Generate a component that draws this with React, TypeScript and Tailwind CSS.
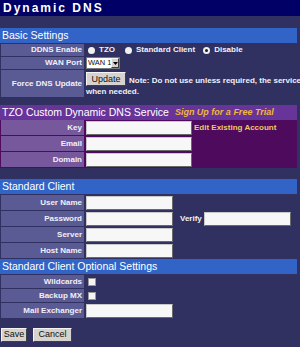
import React from "react";

const F = "font-['Liberation_Sans',Arial,sans-serif]";

function Label({ children, purple = false, h = "h-[15px]" }: { children?: React.ReactNode; purple?: boolean; h?: string }) {
  return (
    <div
      className={`${h} ml-[1px] w-[83px] shrink-0 flex items-center justify-end pr-[2px] text-[8px] font-bold text-[#f0f0f8] whitespace-nowrap ${
        purple ? "bg-[#78589c]" : "bg-[#5a5a94]"
      }`}
    >
      {children}
    </div>
  );
}

function TextInput({ w }: { w: string }) {
  return (
    <div
      className={`${w} h-[14px] bg-[#f7f7f7] border border-t-[#c8c8c8] border-l-[#c8c8c8] border-b-[#6a6a6a] border-r-[#6a6a6a]`}
    />
  );
}

function Radio({ checked }: { checked?: boolean }) {
  return (
    <div className="w-[7px] h-[7px] rounded-full bg-[#f0f0f0] flex items-center justify-center">
      {checked && <div className="w-[3px] h-[3px] rounded-full bg-[#202020]" />}
    </div>
  );
}

function Check() {
  return <div className="w-[8px] h-[8px] bg-[#f4f4f4] border border-[#9a9a9a]" />;
}

function Btn({ children, w }: { children: React.ReactNode; w: string }) {
  return (
    <div
      className={`${w} h-[14px] shrink-0 bg-[#d6d3ce] border border-t-[#f4f4f4] border-l-[#f4f4f4] border-b-[#404040] border-r-[#404040] flex items-center justify-center text-[9px] font-normal text-[#111]`}
    >
      {children}
    </div>
  );
}

function Header({ children, purple = false }: { children: React.ReactNode; purple?: boolean }) {
  return (
    <div
      className={`h-[15px] flex items-center pl-[2px] text-[10.5px] text-white whitespace-nowrap ${
        purple ? "bg-[#673499]" : "bg-[#3264c8]"
      }`}
    >
      {children}
    </div>
  );
}

export default function App() {
  return (
    <div className={`w-[300px] h-[347px] overflow-hidden bg-[#303061] ${F}`}>
      <div className="h-[16px] bg-[#000066] flex items-center pl-[3px] text-[12px] font-bold tracking-[2px] text-white">
        Dynamic DNS
      </div>
      <div className="h-[12px]" />
      <div className="w-[297px]">
        <Header>Basic Settings</Header>
        <div className="flex flex-col gap-[1px] pt-[1px]">
          <div className="flex h-[12px]">
            <Label h="h-[12px]">DDNS Enable</Label>
            <div className="flex items-center pl-[4px] text-[8px] font-bold text-[#f0f0f8] whitespace-nowrap">
              <Radio />
              <span className="ml-[4px]">TZO</span>
              <span className="ml-[10px]"><Radio /></span>
              <span className="ml-[4px]">Standard Client</span>
              <span className="ml-[8px]"><Radio checked /></span>
              <span className="ml-[4px]">Disable</span>
            </div>
          </div>
          <div className="flex h-[12px]">
            <Label h="h-[12px]">WAN Port</Label>
            <div className="pl-[2px] flex items-center">
              <div className="w-[34px] h-[12px] bg-white border border-[#7a7a7a] flex items-center">
                <span className="flex-1 pl-[1px] text-[7.5px] leading-none text-[#111] whitespace-nowrap">WAN 1</span>
                <div className="w-[8px] h-[10px] shrink-0 bg-[#d6d3ce] border border-t-[#f4f4f4] border-l-[#f4f4f4] border-b-[#404040] border-r-[#404040] flex items-center justify-center">
                  <svg width="5" height="3" viewBox="0 0 5 3"><path d="M0 0h5L2.5 3z" fill="#000" /></svg>
                </div>
              </div>
            </div>
          </div>
          <div className="flex h-[27px]">
            <Label h="h-[27px]">Force DNS Update</Label>
            <div className="pl-[2px] pt-[2px] text-[8px] font-bold text-[#f0f0f8] whitespace-nowrap leading-[9px]">
              <div className="flex items-end">
                <Btn w="w-[40px]">Update</Btn>
                <span className="ml-[3px] mb-[1px]">Note: Do not use unless required, the service</span>
              </div>
              <div className="mt-[1px]">when needed.</div>
            </div>
          </div>
        </div>
        <div className="h-[8px]" />
        <div className="bg-[#4e0a5c]">
          <Header purple>
            <span>TZO Custom Dynamic DNS Service</span>
            <span className="ml-[6px] text-[9px] italic font-bold text-[#f0b838]">Sign Up for a Free Trial</span>
          </Header>
          <div className="flex flex-col gap-[1px] pb-[1px]">
            <div className="flex items-center">
              <Label purple>Key</Label>
              <div className="pl-[2px]"><TextInput w="w-[106px]" /></div>
              <span className="ml-[2px] text-[8px] font-bold text-[#eec868]">Edit Existing Account</span>
            </div>
            <div className="flex items-center">
              <Label purple>Email</Label>
              <div className="pl-[2px]"><TextInput w="w-[106px]" /></div>
            </div>
            <div className="flex items-center">
              <Label purple>Domain</Label>
              <div className="pl-[2px]"><TextInput w="w-[106px]" /></div>
            </div>
          </div>
        </div>
        <div className="h-[11px]" />
        <Header>Standard Client</Header>
        <div className="flex flex-col gap-[1px] pt-[1px]">
          <div className="flex items-center">
            <Label>User Name</Label>
            <div className="pl-[2px]"><TextInput w="w-[87px]" /></div>
          </div>
          <div className="flex items-center">
            <Label>Password</Label>
            <div className="pl-[2px]"><TextInput w="w-[87px]" /></div>
            <span className="ml-[7px] text-[8px] font-bold text-[#f0f0f8]">Verify</span>
            <div className="ml-[2px]"><TextInput w="w-[87px]" /></div>
          </div>
          <div className="flex items-center">
            <Label>Server</Label>
            <div className="pl-[2px]"><TextInput w="w-[87px]" /></div>
          </div>
          <div className="flex items-center">
            <Label>Host Name</Label>
            <div className="pl-[2px]"><TextInput w="w-[87px]" /></div>
          </div>
        </div>
        <div className="h-[1px]" />
        <Header>Standard Client Optional Settings</Header>
        <div className="flex flex-col gap-[1px] pt-[1px]">
          <div className="flex items-center">
            <Label h="h-[13px]">Wildcards</Label>
            <div className="pl-[4px]"><Check /></div>
          </div>
          <div className="flex items-center">
            <Label h="h-[13px]">Backup MX</Label>
            <div className="pl-[4px]"><Check /></div>
          </div>
          <div className="flex items-center">
            <Label>Mail Exchanger</Label>
            <div className="pl-[2px]"><TextInput w="w-[87px]" /></div>
          </div>
        </div>
        <div className="flex gap-[6px] pl-[1px] pt-[10px]">
          <Btn w="w-[26px]">Save</Btn>
          <Btn w="w-[39px]">Cancel</Btn>
        </div>
      </div>
    </div>
  );
}
